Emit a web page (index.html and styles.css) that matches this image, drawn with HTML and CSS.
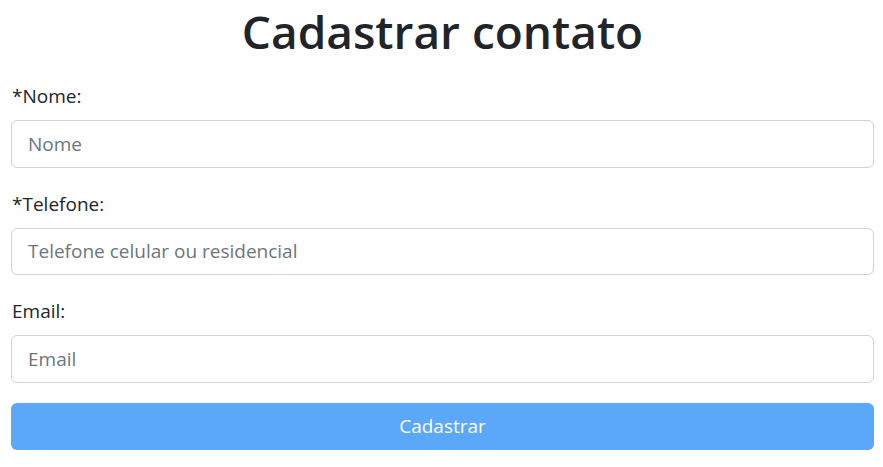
FILE: index.html
```html
<!DOCTYPE html>
<html lang="pt-BR">
<head>
<meta charset="utf-8">
<title>Cadastrar contato</title>
<link rel="stylesheet" href="styles.css">
</head>
<body>
<main class="page">
  <h1 class="title">Cadastrar contato</h1>
  <form class="form">
    <div class="field">
      <label class="label" for="nome">*Nome:</label>
      <input class="input" id="nome" type="text" placeholder="Nome">
    </div>
    <div class="field">
      <label class="label" for="tel">*Telefone:</label>
      <input class="input" id="tel" type="text" placeholder="Telefone celular ou residencial">
    </div>
    <div class="field">
      <label class="label" for="email">Email:</label>
      <input class="input" id="email" type="text" placeholder="Email">
    </div>
    <button class="btn" type="button">Cadastrar</button>
  </form>
</main>
</body>
</html>
```
FILE: styles.css
```css
* { box-sizing: border-box; }
html, body { margin: 0; padding: 0; background: #fff; }
body {
  font-family: "Open Sans", "Noto Sans", sans-serif;
  color: #212529;
  font-size: 19px;
}
.page {
  padding: 0 9px 0 11px;
}
.title {
  margin: 0 0 20px;
  height: 60px;
  line-height: 62px;
  font-size: 46px;
  font-weight: 600;
  text-align: center;
  color: #212529;
}
.form {
  display: flex;
  flex-direction: column;
}
.field {
  display: flex;
  flex-direction: column;
  margin-bottom: 20px;
}
.label {
  height: 30px;
  line-height: 32px;
  margin: 0 0 10px 1px;
  font-size: 19px;
}
.input {
  height: 47.5px;
  width: 100%;
  border: 1px solid #ced4da;
  border-radius: 6px;
  padding: 0 16px;
  font-family: inherit;
  font-size: 19px;
  color: #212529;
  background: #fff;
  outline: none;
}
.input::placeholder { color: #6c757d; opacity: 1; }
.btn {
  height: 47px;
  width: 100%;
  border: 0;
  border-radius: 6px;
  background: #5ba8fb;
  color: #ffffff;
  font-family: inherit;
  font-size: 19px;
  padding: 0;
  cursor: default;
}
```
